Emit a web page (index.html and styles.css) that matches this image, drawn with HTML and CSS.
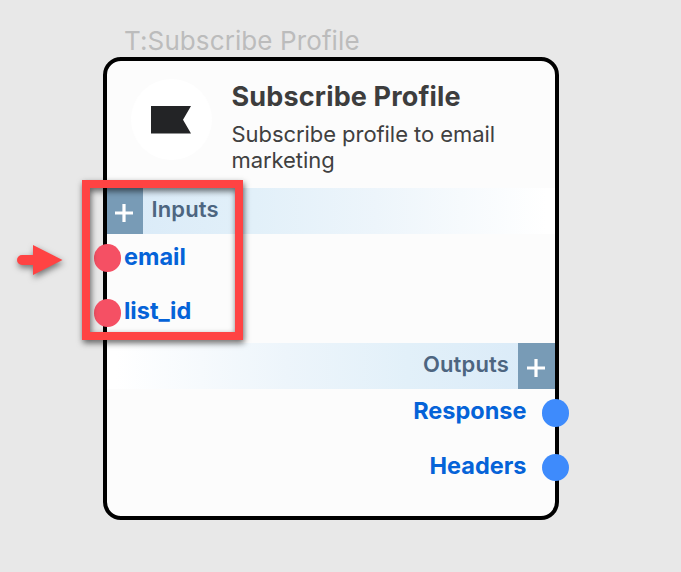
FILE: index.html
```html
<!DOCTYPE html>
<html lang="en">
<head>
<meta charset="utf-8">
<title>Subscribe Profile</title>
<link rel="stylesheet" href="styles.css">
</head>
<body>
<main class="canvas">
  <div class="node-label">T:Subscribe Profile</div>
  <section class="node">
    <header class="head">
      <div class="logo">
        <svg width="40" height="28" viewBox="0 0 40 28"><path d="M0 0H40L32 13.7L40 27.5H0Z" fill="#232426"/></svg>
      </div>
      <div class="intro">
        <h1 class="title">Subscribe Profile</h1>
        <p class="desc">Subscribe profile to email marketing</p>
      </div>
    </header>
    <div class="bar bar-in">
      <button class="add" aria-label="Add input"><svg width="18" height="18" viewBox="0 0 18 18"><path d="M9 0V18M0 9H18" stroke="#fff" stroke-width="3.2"/></svg></button>
      <span class="bar-name">Inputs</span>
    </div>
    <ul class="ports ports-in">
      <li class="port"><span class="dot"></span>email</li>
      <li class="port"><span class="dot"></span>list_id</li>
    </ul>
    <div class="bar bar-out">
      <span class="bar-name">Outputs</span>
      <button class="add" aria-label="Add output"><svg width="18" height="18" viewBox="0 0 18 18"><path d="M9 0V18M0 9H18" stroke="#fff" stroke-width="3.2"/></svg></button>
    </div>
    <ul class="ports ports-out">
      <li class="port"><span class="dot"></span>Response</li>
      <li class="port"><span class="dot"></span>Headers</li>
    </ul>
  </section>
  <div class="highlight"></div>
  <svg class="arrow" width="60" height="46" viewBox="0 0 60 46"><path d="M12 15H23V5L52.500 20L23 35V25H12A5 5 0 0 1 12 15Z" fill="#ff4343"/></svg>
</main>
</body>
</html>
```
FILE: styles.css
```css
* { box-sizing: border-box; }
body { margin: 0; font-family: Inter, "Liberation Sans", sans-serif; background: #e8e8e8; }
.canvas { position: relative; width: 681px; height: 572px; overflow: hidden; padding: 25px 0 0 103px; }
.node-label { height: 32px; padding-left: 21px; font-size: 26px; line-height: 32px; letter-spacing: .1px; color: #bcbcbc; white-space: nowrap; }
.node { width: 455.5px; height: 462.5px; border: 4px solid #000; border-radius: 18px; background: #fcfcfc; }
.head { display: flex; height: 127px; padding: 18px 0 0 23.5px; }
.logo { display: flex; align-items: center; justify-content: center; flex: none; width: 81px; height: 81px; border-radius: 50%; background: #fff; }
.intro { padding-left: 20px; }
.title { margin: 1px 0 0; font-size: 27px; line-height: 34px; letter-spacing: .16px; font-weight: 700; color: #3d3d3d; white-space: nowrap; }
.desc { width: 290px; margin: 7px 0 0; font-size: 22px; line-height: 26px; letter-spacing: -.06px; color: #404040; }
.bar { display: flex; height: 46px; }
.bar-in { background: linear-gradient(90deg, #d9eaf8, #e2f0f9 33%, #edf5fb 60%, #fff 98%); }
.bar-out { justify-content: flex-end; background: linear-gradient(270deg, #d9eaf8, #e2f0f9 33%, #edf5fb 60%, #fff 98%); }
.add { display: flex; align-items: center; justify-content: center; width: 36.5px; height: 46px; margin: 0; padding: 3px 2px 0 0; border: 0; background: #789bb6; }
.bar-in .add { width: 36px; }
.bar-out .add { padding-right: 1px; }
.bar-name { padding: 0 9px 0 8.5px; font-size: 22px; line-height: 43px; font-weight: 600; letter-spacing: .15px; color: #4d6580; }
.ports { margin: 0; padding: 0; list-style: none; font-size: 23.5px; font-weight: 700; color: #0563d8; }
.ports-in { height: 109px; }
.port { position: relative; height: 54.5px; line-height: 46px; }
.ports-in .port { height: 54px; padding-left: 17px; }
.ports-out .port { padding-right: 28px; text-align: right; line-height: 44px; }
.dot { position: absolute; top: 10.4px; width: 27.5px; height: 27.5px; border-radius: 50%; }
.ports-in .dot { left: -13.2px; background: #f55064; }
.ports-in .port + .port .dot { top: 11px; }
.ports-out .dot { right: -14.6px; background: #3e8bfc; }
.highlight { position: absolute; left: 82px; top: 180px; width: 161px; height: 160px; border: 8px solid #ff4343; filter: drop-shadow(1px 3px 3px rgba(0, 0, 0, .6)); }
.arrow { position: absolute; left: 10px; top: 240px; filter: drop-shadow(1px 3px 3px rgba(0, 0, 0, .5)); }
```
